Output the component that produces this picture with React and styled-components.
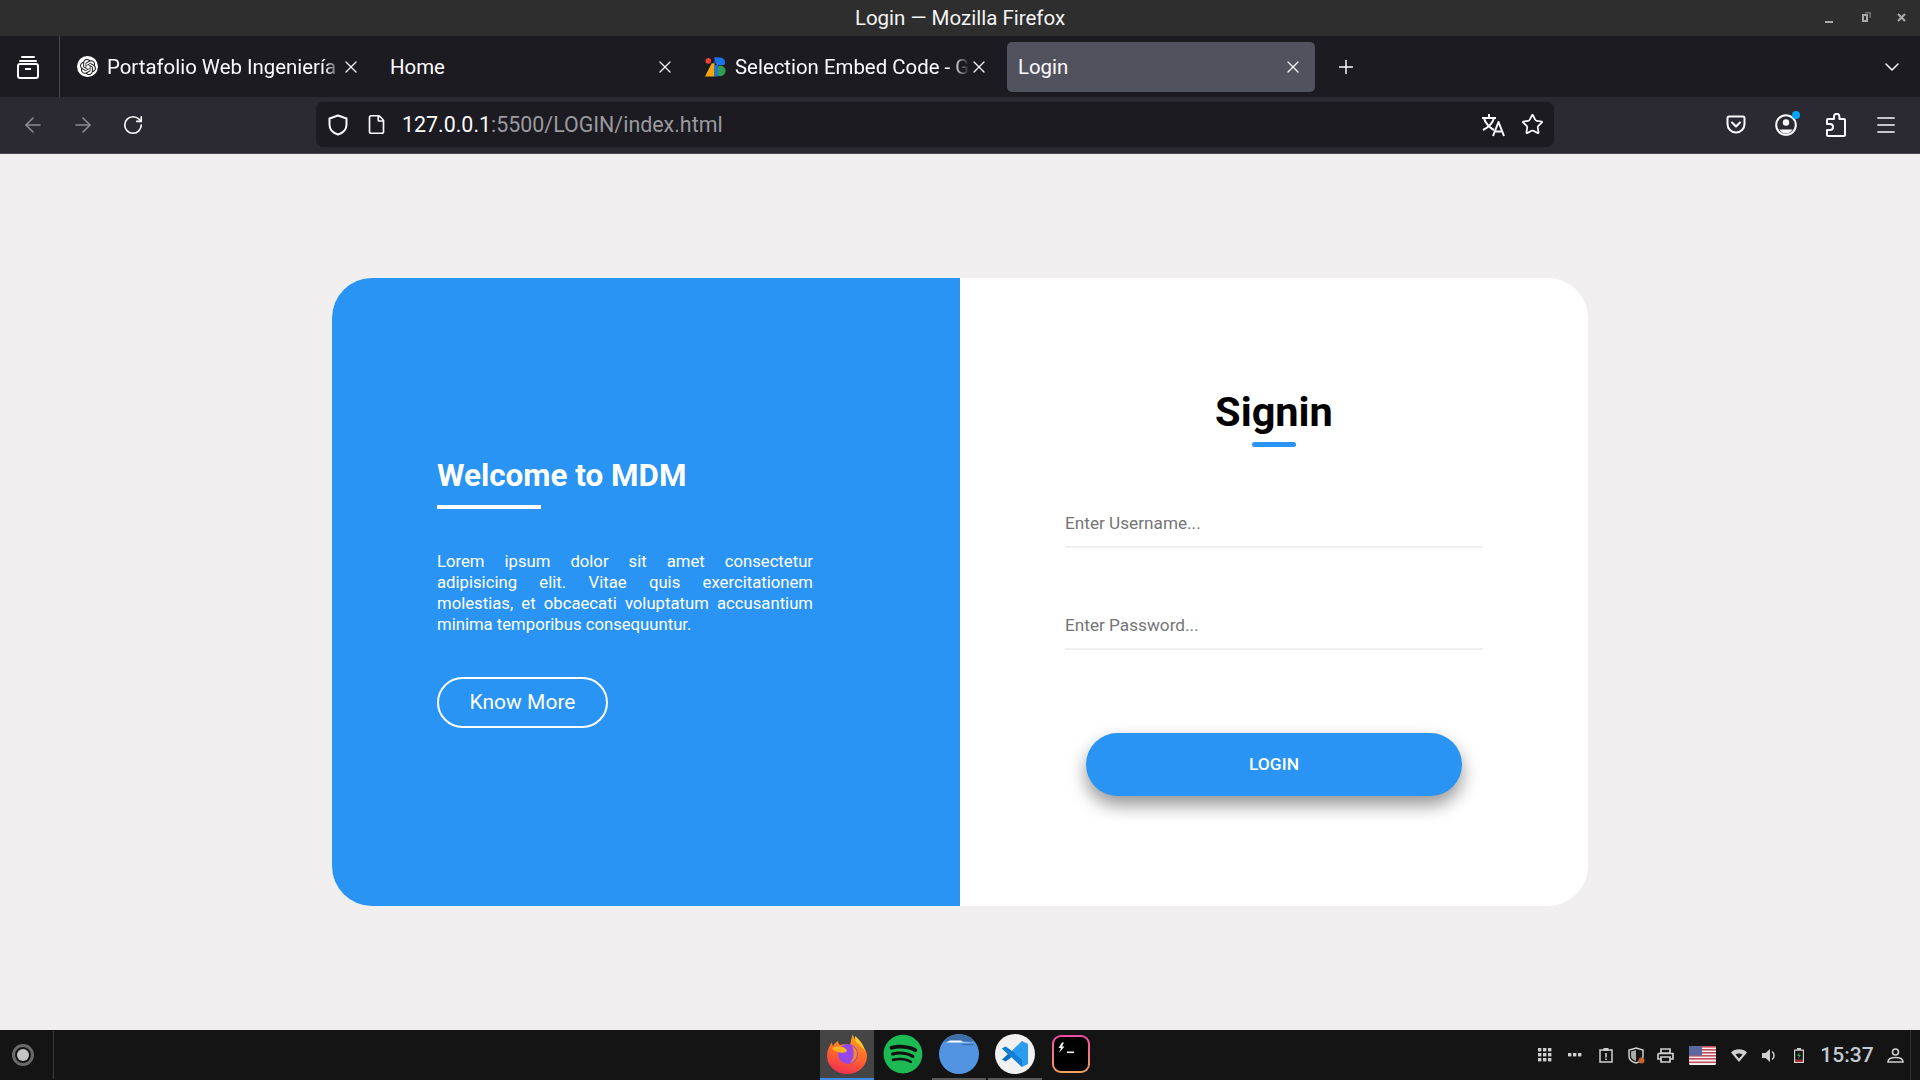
import React from 'react';
import styled, { createGlobalStyle } from 'styled-components';
import { ArrowLeft, ArrowRight, RotateCw, File, Star, Plus, ChevronDown, X, Menu } from 'lucide-react';
import { SiOpenai } from 'react-icons/si';
import { FaSpotify } from 'react-icons/fa';

const GlobalStyle = createGlobalStyle`
  html, body, #root { height: 100%; margin: 0; }
  * { box-sizing: border-box; }
  body { font-family: Roboto, "Liberation Sans", sans-serif; background: #f0eeef; overflow: hidden; }
`;

const Screen = styled.div`
  height: 1080px;
  display: flex;
  flex-direction: column;
`;

/* window title */
const TitleBar = styled.header`
  height: 36px;
  flex: none;
  display: flex;
  align-items: center;
  justify-content: center;
  position: relative;
  background: #2e2e2e;
  color: #f4f4f4;
  font-size: 20.5px;
`;

const WindowControls = styled.div`
  position: absolute;
  right: 8px;
  top: 8px;
  display: flex;
  gap: 16px;
  color: #a8a8a8;
`;

/* tabs */
const TabBar = styled.div`
  height: 61px;
  flex: none;
  display: flex;
  background: #1c1b22;
  color: #fbfbfe;
`;

const GroupButton = styled.div`
  width: 60px;
  flex: none;
  display: flex;
  align-items: center;
  justify-content: center;
  padding-right: 3px;
  border-right: 1px solid #4a4a50;
`;

const TabList = styled.div`
  display: flex;
  align-items: center;
  gap: 6px;
  padding: 0 0 0 5px;
  flex: 1;
`;

const Tab = styled.div`
  width: 308px;
  height: 50px;
  padding: 0 12px 0 11px;
  flex: none;
  display: flex;
  align-items: center;
  border-radius: 5px;
  background: ${p => (p.$active ? '#52525e' : 'transparent')};
  font-size: 20.4px;
`;

const TabTitle = styled.span`
  flex: 1;
  min-width: 0;
  white-space: nowrap;
  ${p => p.$fade && `
    -webkit-mask-image: linear-gradient(to left, transparent 0, #000 16px);
    mask-image: linear-gradient(to left, transparent 0, #000 16px);
  `}
`;

const AddTab = styled.div`
  width: 40px;
  height: 40px;
  margin-left: 5px;
  display: flex;
  align-items: center;
  justify-content: center;
`;

const TabOverflow = styled.div`
  width: 56px;
  flex: none;
  display: flex;
  align-items: center;
  justify-content: center;
`;

const Favicon = styled.span`
  width: 21px;
  height: 21px;
  margin: 0 9px 0 1px;
  flex: none;
  display: flex;
  align-items: center;
  justify-content: center;
  border-radius: 50%;
  background: ${p => (p.$round ? '#fff' : 'transparent')};
  color: #222;
`;

/* toolbar */
const Toolbar = styled.div`
  height: 57px;
  flex: none;
  display: flex;
  align-items: center;
  padding: 0 9px 1px 8px;
  background: #2b2a33;
  border-bottom: 1px solid #4b4a52;
  color: #fbfbfe;
`;

const ToolButton = styled.div`
  width: 50px;
  height: 40px;
  flex: none;
  display: flex;
  align-items: center;
  justify-content: center;
  color: ${p => (p.$dim ? '#8b8a91' : 'inherit')};
`;

const UrlBar = styled.div`
  width: 1238px;
  height: 45px;
  margin-left: 158px;
  padding: 0 7px 0 12px;
  flex: none;
  display: flex;
  align-items: center;
  background: #1c1b22;
  border-radius: 7px;
`;

const UrlIcon = styled.span`
  width: ${p => p.$w || 39}px;
  flex: none;
  display: flex;
  align-items: center;
  justify-content: ${p => p.$start ? 'flex-start' : 'center'};
`;

const UrlText = styled.span`
  flex: 1;
  margin-left: 6px;
  font-size: 21.4px;
  color: #9a9a9f;
  span { color: #fbfbfe; }
`;

const ToolRight = styled.div`
  margin-left: auto;
  display: flex;
`;

const AccountButton = styled(ToolButton)`
  position: relative;
  &::after {
    content: '';
    position: absolute;
    left: 31px;
    top: 6px;
    width: 8px;
    height: 8px;
    border-radius: 50%;
    background: #00a2f2;
  }
`;

/* page */
const Main = styled.main`
  flex: 1;
  min-height: 0;
  display: flex;
  align-items: center;
  justify-content: center;
  background: #f0eeef;
`;

const Card = styled.section`
  width: 1256px;
  height: 628px;
  display: flex;
  border-radius: 40px;
  overflow: hidden;
  background: #fff;
`;

const InfoPanel = styled.div`
  width: 628px;
  flex: none;
  padding: 0 147px 0 105px;
  display: flex;
  flex-direction: column;
  justify-content: center;
  align-items: flex-start;
  background: #2994f3;
  color: #fff;
`;

const InfoTitle = styled.h2`
  margin: 0;
  padding-top: 1px;
  font-size: 31.4px;
  line-height: 38px;
  font-weight: 700;
`;

const InfoRule = styled.div`
  width: 104px;
  height: 4px;
  margin: 10px 0 42px;
  background: #fff;
`;

const InfoText = styled.p`
  margin: 0 0 42px;
  font-size: 16.7px;
  line-height: 21px;
  text-align: justify;
`;

const OutlineButton = styled.button`
  width: 171px;
  height: 51px;
  padding: 0 0 2px;
  border: 2px solid #fff;
  border-radius: 26px;
  background: transparent;
  color: #fff;
  font-family: inherit;
  font-size: 21px;
  font-weight: 400;
`;

const FormPanel = styled.form`
  flex: 1;
  padding-top: 110px;
  display: flex;
  flex-direction: column;
  align-items: center;
`;

const FormTitle = styled.h1`
  margin: 0;
  font-size: 41.5px;
  line-height: 47px;
  font-weight: 700;
  color: #000;
`;

const FormRule = styled.div`
  width: 44px;
  height: 5px;
  margin: 7px 0 53px;
  border-radius: 3px;
  background: #2994f3;
`;

const Field = styled.input`
  width: 418px;
  height: 48px;
  margin-bottom: 54px;
  padding: 0;
  border: 0;
  border-bottom: 2px solid #efefef;
  outline: 0;
  background: transparent;
  font-family: inherit;
  font-size: 17.2px;
  &::placeholder { color: #757575; }
`;

const SubmitButton = styled.button`
  width: 376px;
  height: 63px;
  margin-top: 29px;
  padding: 0 0 2px;
  border: 0;
  border-radius: 32px;
  background: #2994f3;
  color: #fff;
  font-family: inherit;
  font-size: 17.4px;
  font-weight: 500;
  box-shadow: 0 9px 18px rgba(0, 0, 0, 0.42);
`;

/* desktop panel */
const Taskbar = styled.footer`
  height: 50px;
  flex: none;
  display: flex;
  background: #141414;
  color: #cfcfcf;
`;

const TaskLeft = styled.div`
  width: 820px;
  flex: none;
  display: flex;
`;

const RecordSlot = styled.div`
  width: 54px;
  margin: 1px 0;
  display: flex;
  align-items: center;
  justify-content: center;
  padding-right: 8px;
  border-right: 1px solid #3a3a3a;
`;

const RecordDot = styled.span`
  width: 22px;
  height: 22px;
  border-radius: 50%;
  border: 3px solid #6a6a6a;
  display: flex;
  align-items: center;
  justify-content: center;
  &::before {
    content: '';
    width: 12px;
    height: 12px;
    border-radius: 50%;
    background: #c4c4c4;
  }
`;

const Dock = styled.div`
  display: flex;
  gap: 2px;
`;

const DockItem = styled.div`
  width: 54px;
  display: flex;
  align-items: center;
  justify-content: center;
  background: ${p => (p.$active ? '#454545' : 'transparent')};
  border-bottom: 2px solid ${p => (p.$active ? '#3f8ae2' : p.$open ? '#5a5a5a' : 'transparent')};
`;

const SpotifyBadge = styled.span`
  width: 40px;
  height: 40px;
  display: flex;
  align-items: center;
  justify-content: center;
  border-radius: 50%;
  background: #111;
  color: #1db954;
`;

const TerminalFrame = styled.span`
  width: 38px;
  height: 38px;
  padding: 2px;
  border-radius: 9px;
  background: linear-gradient(180deg, #f04aa8 0%, #f2a35a 100%);
  display: flex;
`;

const TerminalScreen = styled.span`
  flex: 1;
  border-radius: 7px;
  background: #000;
  display: flex;
`;

const Tray = styled.div`
  margin-left: auto;
  padding-right: 9px;
  display: flex;
  align-items: center;
`;

const TraySlot = styled.span`
  width: ${p => p.$w || 30}px;
  flex: none;
  display: flex;
  align-items: center;
  justify-content: center;
`;

const Clock = styled.span`
  width: 66px;
  flex: none;
  text-align: center;
  font-size: 21px;
  font-weight: 500;
  color: #c3cad2;
`;

const UserSlot = styled(TraySlot)`
  border-right: 1px solid #333;
  height: 50px;
`;

/* drawn icons */
const TabGroupIcon = () => (
  <svg width="22" height="24" viewBox="0 0 22 24" fill="none" stroke="#fbfbfe" strokeWidth="2">
    <path d="M5 2h12" strokeLinecap="round" />
    <path d="M3 6h16" strokeLinecap="round" />
    <rect x="1" y="9" width="20" height="14" rx="2" />
    <path d="M8 14h6" />
  </svg>
);

const SelectionIcon = () => (
  <svg width="22" height="20" viewBox="0 0 22 20">
    <polygon points="0,20 7,6 10,6 10,20" fill="#f9a60c" />
    <circle cx="3.5" cy="3.5" r="3" fill="#ea4335" />
    <path d="M10 0h6a5 5 0 0 1 4 8h-8z" fill="#1a73e8" />
    <path d="M10 0h3l-3 9z" fill="#1a73e8" />
    <circle cx="16" cy="14" r="5.6" fill="#2f9e52" />
    <rect x="10" y="8" width="3.5" height="12" fill="#1a73e8" />
  </svg>
);

const ShieldIcon = () => (
  <svg width="20" height="22" viewBox="0 0 20 22" fill="none" stroke="#fbfbfe" strokeWidth="2" strokeLinejoin="round">
    <path d="M10 1.500 18.500 4.500v6c0 5-3.500 8.500-8.500 10-5-1.500-8.500-5-8.500-10v-6z" />
  </svg>
);

const TranslateIcon = () => (
  <svg width="24" height="24" viewBox="0 0 24 24" fill="none" stroke="#fbfbfe" strokeWidth="2">
    <path d="M1 5h14M8 1v4" />
    <path d="M3 5c1 5 6 10 10 12" />
    <path d="M13 5c-1 4-5 9-11 12" />
    <path d="M12 23 17.500 9 23 23M14 18.500h7" strokeLinejoin="round" />
  </svg>
);

const PocketIcon = () => (
  <svg width="20" height="20" viewBox="0 0 20 20" fill="none" stroke="#fbfbfe" strokeWidth="2" strokeLinecap="round" strokeLinejoin="round">
    <path d="M3 1.500h14a1.500 1.500 0 0 1 1.500 1.500v6a8.500 8.500 0 0 1-17 0V3A1.500 1.500 0 0 1 3 1.500z" />
    <path d="m6 7.500 4 4 4-4" />
  </svg>
);

const AccountIcon = () => (
  <svg width="22" height="22" viewBox="0 0 22 22">
    <circle cx="11" cy="11" r="9.800" fill="none" stroke="#fbfbfe" strokeWidth="2" />
    <circle cx="11" cy="8.500" r="3.200" fill="#fbfbfe" />
    <path d="M4.500 15.500h13A8 8 0 0 1 11 19.500a8 8 0 0 1-6.500-4z" fill="#fbfbfe" />
  </svg>
);

const ExtensionIcon = () => (
  <svg width="20" height="24" viewBox="0 0 20 24" fill="none" stroke="#fbfbfe" strokeWidth="2" strokeLinejoin="round">
    <path d="M8 6V3.500a2.700 2.700 0 0 1 5.400 0V6H18a1 1 0 0 1 1 1v15a1 1 0 0 1-1 1H2a1 1 0 0 1-1-1v-5h3a3 3 0 0 0 0-6H1V7a1 1 0 0 1 1-1z" />
  </svg>
);

const FirefoxIcon = () => (
  <svg width="40" height="40" viewBox="0 0 40 40">
    <defs>
      <linearGradient id="foxBody" x1="0.7" y1="0" x2="0.4" y2="1">
        <stop offset="0" stopColor="#ffa51f" />
        <stop offset="0.5" stopColor="#ff6a2a" />
        <stop offset="1" stopColor="#f0304f" />
      </linearGradient>
    </defs>
    <path d="M26 0c0 4 3 6 6 9 5 4 8 8 8 13a20 18 0 0 1-40 0C0 17 2 12 5 8c0 2 .5 3 1 4 1-2 3-4 5-5 0 2 1 3 2 4 3-1 7-1 10 1 1-4 1-8 3-12z" fill="url(#foxBody)" />
    <circle cx="21" cy="20" r="10" fill="#9547e8" />
    <path d="M5 14c4-2 10-2 14 1 1 1 1 2 0 3-3 1-6 1-8 0-3-1-5-2-6-4z" fill="#ffb21f" />
    <path d="M25 12c7 3 7 14-2 17 4-4 5-11 2-17z" fill="#ff8a1c" />
    <path d="M28 2c5 4 9 9 10 15-3-4-6-6-8-8-2-2-2-4-2-7z" fill="#ffc928" />
  </svg>
);

const FilesIcon = () => (
  <svg width="40" height="40" viewBox="0 0 40 40">
    <circle cx="20" cy="20" r="20" fill="#5294e2" />
    <path d="M4.500 7.500A20 20 0 0 1 35.500 7.500z" fill="#3f6fa8" />
    <path d="M7 8.500 11 6.500h11l2 1.500 12 .5H9z" fill="#fff" />
    <path d="M23 10h11v1.200H23z" fill="#3f6fa8" />
  </svg>
);

const VsCodeIcon = () => (
  <svg width="40" height="40" viewBox="0 0 40 40">
    <circle cx="20" cy="20" r="20" fill="#f1f1f1" />
    <path d="M27 7 13.500 20 27 33l6-3V10z" fill="#2c9cf0" />
    <path d="M27 7v8l-6.500 5-7-5.500-3-2L7 14.500 13 20l-6 5.500 3.500 2 3-2L27 14.500V7z" fill="#0a6fc4" />
    <path d="M27 25.500 13.500 15.500 10.500 13 7 14.500 27 33z" fill="#1180d6" />
  </svg>
);

const TerminalGlyph = () => (
  <svg width="34" height="34" viewBox="0 0 34 34" fill="#f4f4f4">
    <path d="M8 5.500 4.500 11H7l-2 5 5.500-6.500H8l2-4z" />
    <rect x="13" y="14.500" width="7" height="1.600" />
  </svg>
);

const TrayIcon = ({ children, w = 18, h = 18, view = '0 0 18 18' }) => (
  <svg width={w} height={h} viewBox={view}>{children}</svg>
);

const FlagIcon = () => (
  <svg width="27" height="19" viewBox="0 0 27 19">
    <rect width="27" height="19" rx="1.500" fill="#f3f3f3" />
    {[0, 3, 6, 9, 12, 15.500].map(y => <rect key={y} y={y} width="27" height="1.600" fill="#c44d5c" />)}
    <rect width="13" height="9.500" fill="#5a6aa0" />
  </svg>
);

const App = () => {
  return (
    <Screen>
      <GlobalStyle />
      <TitleBar>
        Login — Mozilla Firefox
        <WindowControls>
          <TrayIcon w={20} h={20} view="0 0 20 20">
            <rect x="5" y="13" width="8" height="2" fill="currentColor" />
          </TrayIcon>
          <TrayIcon w={20} h={20} view="0 0 20 20">
            <path d="M6 6h6v8H6zM8 8v4h2V8z" fill="currentColor" fillRule="evenodd" />
            <path d="M9 4h6v6h-1.500V5.500H9z" fill="#6e6e6e" />
          </TrayIcon>
          <TrayIcon w={20} h={20} view="0 0 20 20">
            <path d="m6 6 7 7M13 6l-7 7" stroke="currentColor" strokeWidth="2.200" />
          </TrayIcon>
        </WindowControls>
      </TitleBar>

      <TabBar>
        <GroupButton><TabGroupIcon /></GroupButton>
        <TabList>
          <Tab>
            <Favicon $round><SiOpenai size={16} /></Favicon>
            <TabTitle $fade>Portafolio Web Ingeniería</TabTitle>
            <X size={20} strokeWidth={1.5} />
          </Tab>
          <Tab>
            <TabTitle>Home</TabTitle>
            <X size={20} strokeWidth={1.5} />
          </Tab>
          <Tab>
            <Favicon><SelectionIcon /></Favicon>
            <TabTitle $fade>Selection Embed Code - G</TabTitle>
            <X size={20} strokeWidth={1.5} />
          </Tab>
          <Tab $active>
            <TabTitle>Login</TabTitle>
            <X size={20} strokeWidth={1.5} />
          </Tab>
          <AddTab><Plus size={22} strokeWidth={1.6} /></AddTab>
        </TabList>
        <TabOverflow><ChevronDown size={24} strokeWidth={1.5} /></TabOverflow>
      </TabBar>

      <Toolbar>
        <ToolButton $dim><ArrowLeft size={24} strokeWidth={1.6} /></ToolButton>
        <ToolButton $dim><ArrowRight size={24} strokeWidth={1.6} /></ToolButton>
        <ToolButton><RotateCw size={22} strokeWidth={1.8} /></ToolButton>
        <UrlBar>
          <UrlIcon $w={29} $start><ShieldIcon /></UrlIcon>
          <UrlIcon $w={39}><File size={21} strokeWidth={1.9} /></UrlIcon>
          <UrlText><span>127.0.0.1</span>:5500/LOGIN/index.html</UrlText>
          <UrlIcon $w={51}><TranslateIcon /></UrlIcon>
          <UrlIcon $w={29}><Star size={23} strokeWidth={1.8} /></UrlIcon>
        </UrlBar>
        <ToolRight>
          <ToolButton><PocketIcon /></ToolButton>
          <AccountButton><AccountIcon /></AccountButton>
          <ToolButton><ExtensionIcon /></ToolButton>
          <ToolButton><Menu size={24} strokeWidth={1.7} /></ToolButton>
        </ToolRight>
      </Toolbar>

      <Main>
        <Card>
          <InfoPanel>
            <InfoTitle>Welcome to MDM</InfoTitle>
            <InfoRule />
            <InfoText>
              Lorem ipsum dolor sit amet consectetur adipisicing elit. Vitae quis exercitationem
              molestias, et obcaecati voluptatum accusantium minima temporibus consequuntur.
            </InfoText>
            <OutlineButton type="button">Know More</OutlineButton>
          </InfoPanel>
          <FormPanel>
            <FormTitle>Signin</FormTitle>
            <FormRule />
            <Field type="text" placeholder="Enter Username..." />
            <Field type="password" placeholder="Enter Password..." />
            <SubmitButton type="button">LOGIN</SubmitButton>
          </FormPanel>
        </Card>
      </Main>

      <Taskbar>
        <TaskLeft>
          <RecordSlot><RecordDot /></RecordSlot>
        </TaskLeft>
        <Dock>
          <DockItem $active><FirefoxIcon /></DockItem>
          <DockItem><SpotifyBadge><FaSpotify size={40} /></SpotifyBadge></DockItem>
          <DockItem $open><FilesIcon /></DockItem>
          <DockItem $open><VsCodeIcon /></DockItem>
          <DockItem><TerminalFrame><TerminalScreen><TerminalGlyph /></TerminalScreen></TerminalFrame></DockItem>
        </Dock>
        <Tray>
          <TraySlot>
            <TrayIcon w={14} h={14} view="0 0 14 14">
              {[0, 5, 10].flatMap(y => [0, 5, 10].map(x => <rect key={`${x}-${y}`} x={x} y={y} width="3.400" height="3.400" fill="currentColor" />))}
            </TrayIcon>
          </TraySlot>
          <TraySlot>
            <TrayIcon w={14} h={4} view="0 0 14 4">
              {[0, 5, 10].map(x => <rect key={x} x={x} width="3.400" height="3.400" fill="currentColor" />)}
            </TrayIcon>
          </TraySlot>
          <TraySlot $w={32}>
            <TrayIcon w={14} h={16} view="0 0 14 16">
              <path d="M1 3h12v12H1z" fill="none" stroke="currentColor" strokeWidth="1.500" />
              <path d="M4.500 1h5v3h-5z" fill="currentColor" />
              <path d="M6.200 6h1.600v4.500H6.200zM6.200 11.500h1.600v1.500H6.200z" fill="currentColor" />
            </TrayIcon>
          </TraySlot>
          <TraySlot $w={28}>
            <TrayIcon w={17} h={17} view="0 0 17 17">
              <path d="M8 1 15 3v6c0 3.500-3 6-7 7-4-1-7-3.500-7-7V3z" fill="none" stroke="currentColor" strokeWidth="1.500" />
              <path d="M8 3v11c-3-1-5-2.500-5-5V4.500z" fill="currentColor" opacity="0.8" />
              <circle cx="13.500" cy="13.500" r="3" fill="#c8622e" />
            </TrayIcon>
          </TraySlot>
          <TraySlot>
            <TrayIcon w={17} h={15} view="0 0 17 15">
              <path d="M4 1h9v4H4zM1 5.500h15V11h-3M4 11H1V5.500M4 9h9v5H4z" fill="none" stroke="currentColor" strokeWidth="1.700" />
            </TrayIcon>
          </TraySlot>
          <TraySlot $w={44}><FlagIcon /></TraySlot>
          <TraySlot>
            <TrayIcon w={16} h={13} view="0 0 16 13">
              <path d="M0 3.500C4-.8 12-.8 16 3.500L8 13z" fill="currentColor" />
              <path d="M4.500 5.500c2-1.500 5-1.500 7 0L8 9.500z" fill="#141414" />
            </TrayIcon>
          </TraySlot>
          <TraySlot>
            <TrayIcon w={15} h={15} view="0 0 15 15">
              <path d="M0 5h3.500L8 1v13L3.500 10H0z" fill="currentColor" />
              <path d="M10 3.500a5 5 0 0 1 0 8" fill="none" stroke="currentColor" strokeWidth="1.500" />
            </TrayIcon>
          </TraySlot>
          <TraySlot>
            <TrayIcon w={10} h={15} view="0 0 10 15">
              <path d="M3 0h4v1.500h3V15H0V1.500h3z" fill="currentColor" />
              <rect x="1.200" y="2.800" width="7.600" height="9" fill="#141414" />
              <path d="M5.500 4 3 8h1.800L4.200 11 7 7H5.200z" fill="#3aa655" />
              <rect x="1.200" y="11.800" width="7.600" height="2" fill="#a02020" />
            </TrayIcon>
          </TraySlot>
          <Clock>15:37</Clock>
          <UserSlot $w={31}>
            <TrayIcon w={17} h={15} view="0 0 17 15">
              <circle cx="8.500" cy="4" r="3" fill="none" stroke="currentColor" strokeWidth="1.600" />
              <path d="M1 14c0-3 3-4.500 7.500-4.500S16 11 16 14z" fill="none" stroke="currentColor" strokeWidth="1.600" />
            </TrayIcon>
          </UserSlot>
        </Tray>
      </Taskbar>
    </Screen>
  );
};

export default App;
